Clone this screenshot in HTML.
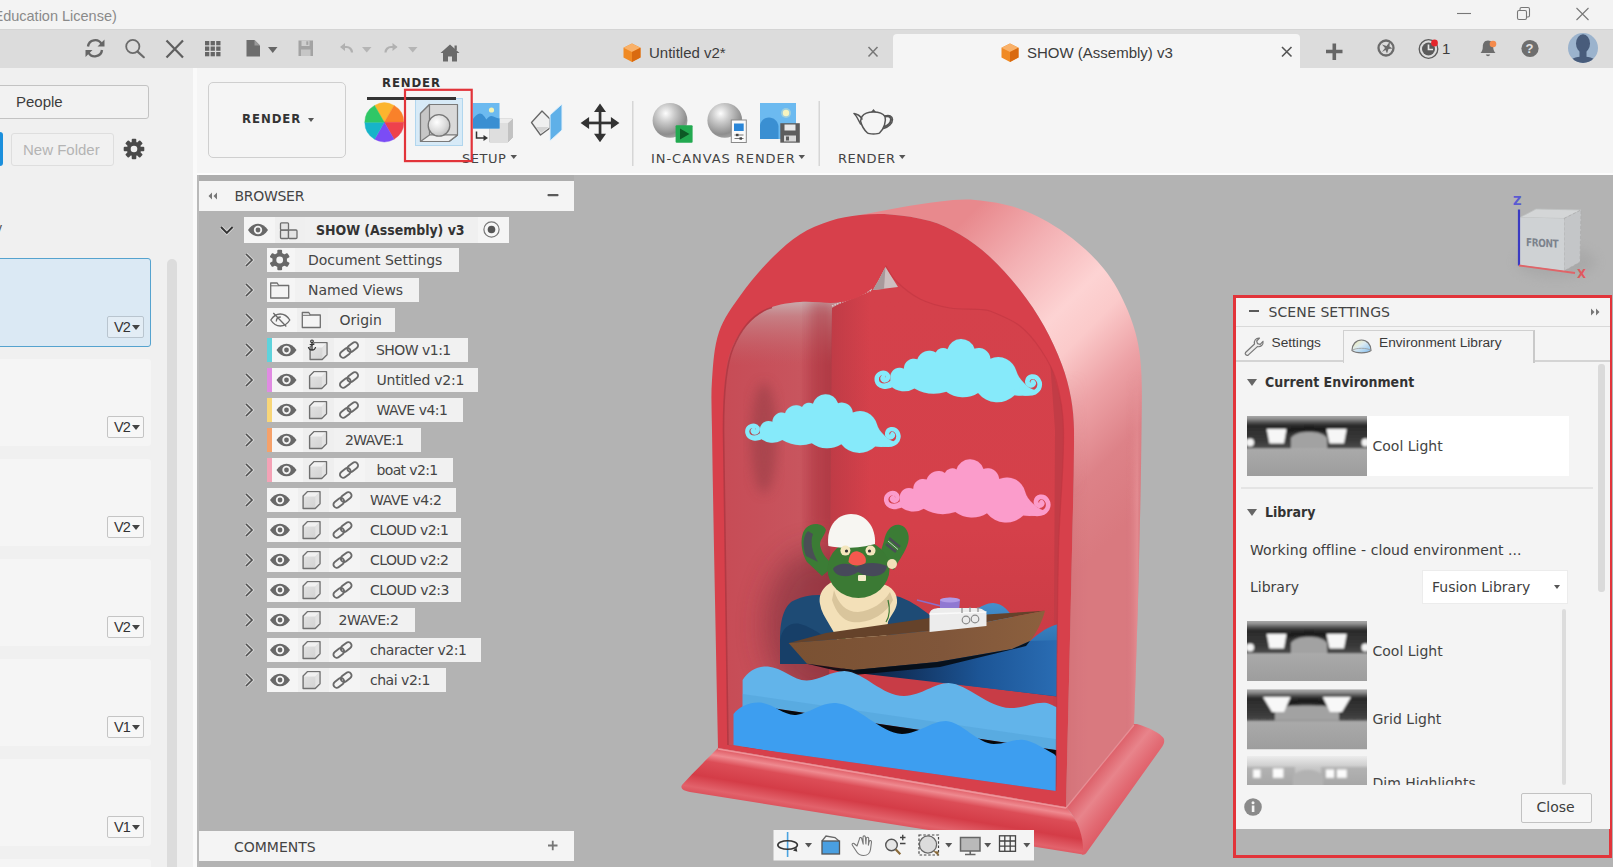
<!DOCTYPE html>
<html lang="en"><head><meta charset="utf-8"><title>SHOW (Assembly) v3 - Render</title>
<style>
html,body{margin:0;padding:0}
body{width:1613px;height:867px;position:relative;overflow:hidden;background:#b3b3b3;font-family:"DejaVu Sans","Liberation Sans",sans-serif;font-size:14px;color:#3a3a3a;line-height:1}
.a{position:absolute}
.lib{font-family:"Liberation Sans",sans-serif}
.t{position:absolute;white-space:nowrap;line-height:20px;height:20px}
.bold{font-family:"DejaVu Sans Condensed","DejaVu Sans",sans-serif;font-weight:bold;font-stretch:condensed}
svg{position:absolute;overflow:visible}
/* title bar */
#title{left:0;top:0;width:1613px;height:29px;background:#f3f3f3}
#bar{left:0;top:29px;width:1613px;height:39px;background:#dcdcdc;border-top:1px solid #d4d4d4;box-sizing:border-box}
#left{left:0;top:68px;width:193px;height:799px;background:#f0f0f0}
#lstrip{left:193px;top:68px;width:4px;height:799px;background:#fafafa}
#lstrip2{left:197px;top:68px;width:2px;height:799px;background:#b9b9b9}
#ribbon{left:197px;top:68px;width:1416px;height:106.500px;background:#f5f5f5;box-sizing:border-box;border-bottom:2px solid #fcfcfc}
.tab-act{left:893px;top:34px;width:407px;height:34px;background:#f5f5f5;border-radius:4px 4px 0 0}
.btn{position:absolute;box-sizing:border-box;border:1px solid #c9c9c9;border-radius:3px;background:#f4f4f4}
.item{position:absolute;left:-4px;width:155px;height:87px;background:#f5f5f5;border-radius:3px}
.ver{position:absolute;left:107px;width:37px;height:22px;box-sizing:border-box;border:1px solid #c4c4c4;border-radius:2px;background:#f7f7f7;font-size:14.500px;line-height:20px;padding-left:6px;color:#333;letter-spacing:-0.8px}
.ver:after{content:"";position:absolute;right:3px;top:8px;border:4px solid transparent;border-top:5px solid #444;border-bottom:0}
/* browser */
.row{position:absolute;height:24px;background:#f1f1f1}
.cell{position:absolute;top:0;height:24px;background:#ededed}
.rt{position:absolute;top:2px;line-height:20px;white-space:nowrap;color:#444;font-size:14px}
.cb{position:absolute;left:0;top:0;width:5.500px;height:24px}
</style></head><body>
<!-- title bar -->
<div class="a" id="title"></div>
<div class="t lib" style="left:-6.500px;top:5.500px;font-size:14.500px;color:#8a8a8a">Education License)</div>
<svg style="left:1450px;top:0" width="160" height="28" viewBox="0 0 160 28" fill="none" stroke="#777" stroke-width="1.1">
<path d="M7 13.5h14"/><rect x="67.500" y="10.500" width="9" height="9" rx="1.500"/><path d="M70 10.500v-1.500a1.500 1.500 0 0 1 1.500-1.500h6.500a1.500 1.500 0 0 1 1.500 1.500v6.500a1.500 1.500 0 0 1-1.500 1.500h-1.500"/>
<path d="M126.500 8l12 12M138.500 8l-12 12"/></svg>
<!-- app bar -->
<div class="a" id="bar"></div>
<div class="a tab-act"></div>
<svg style="left:0;top:28px" width="1613" height="40" viewBox="0 28 1613 40">
<!-- refresh -->
<g fill="none" stroke="#666" stroke-width="2.400"><path d="M88 46.500a7.200 7.200 0 0 1 13.500-2.500"/><path d="M102 50a7.200 7.200 0 0 1-13.500 2.500"/></g>
<path d="M104.500 39.500v7h-7zM85.500 57v-7h7z" fill="#666"/>
<!-- search -->
<circle cx="132.800" cy="46.500" r="6.600" fill="none" stroke="#6b6b6b" stroke-width="1.800"/><path d="M137.600 51.600l6.200 5.600" stroke="#6b6b6b" stroke-width="2.200" stroke-linecap="round"/>
<!-- X -->
<path d="M166.500 40.500l16.500 17M183 40.500l-16.500 17" stroke="#5f5f5f" stroke-width="2.200" fill="none"/>
<!-- grid -->
<g fill="#666"><rect x="205" y="41" width="4.300" height="4.300"/><rect x="210.600" y="41" width="4.300" height="4.300"/><rect x="216.200" y="41" width="4.300" height="4.300"/><rect x="205" y="46.500" width="4.300" height="4.300"/><rect x="210.600" y="46.500" width="4.300" height="4.300"/><rect x="216.200" y="46.500" width="4.300" height="4.300"/><rect x="205" y="52" width="4.300" height="4.300"/><rect x="210.600" y="52" width="4.300" height="4.300"/><rect x="216.200" y="52" width="4.300" height="4.300"/></g>
<!-- file -->
<path d="M246.500 40h8l5.500 5.500v11h-13.500z" fill="#6d6d6d"/><path d="M254.500 40v5.500h5.500" fill="#9a9a9a"/>
<path d="M268 47h9.500l-4.750 6z" fill="#666"/>
<!-- save -->
<g fill="#a3a3a3"><path d="M298.500 40.500h14.500v15.500h-14.500z"/></g><rect x="301.500" y="40.500" width="8" height="5.500" fill="#cfcfcf"/><rect x="301" y="49.500" width="9.500" height="6.500" fill="#c6c6c6"/><rect x="306.300" y="41.300" width="2" height="3.600" fill="#a3a3a3"/>
<!-- undo -->
<path d="M345 43l-5 4 5 4" fill="#b1b1b1" stroke="none"/><path d="M341 47h5.500a5.500 5.500 0 0 1 5.500 5.500" fill="none" stroke="#b1b1b1" stroke-width="2.200"/>
<path d="M362 47h9.500l-4.750 5.500z" fill="#b5b5b5"/>
<!-- redo -->
<path d="M392.500 43l5 4-5 4" fill="#b1b1b1"/><path d="M396.500 47h-5.500a5.500 5.500 0 0 0-5.500 5.500" fill="none" stroke="#b1b1b1" stroke-width="2.200"/>
<path d="M408 47h9.500l-4.750 5.500z" fill="#b5b5b5"/>
<!-- home -->
<path d="M450 44.500l9.500 8.500h-2.500v8.500h-5v-5h-4v5h-5v-8.500h-2.500z" fill="#6a6a6a"/><rect x="454.500" y="45.500" width="2.300" height="4.500" fill="#6a6a6a"/>
<!-- tab 1 -->
<g transform="translate(632,53)"><path d="M0-9.500l8.500 4.200v9.800l-8.500 4.500-8.500-4.500v-9.800z" fill="#f08a24"/><path d="M0-9.500l8.500 4.200-8.500 4.300-8.500-4.300z" fill="#f9b169"/><path d="M0-1v10l8.500-4.500v-9.800z" fill="#d96a10"/></g>
<path d="M868.500 47l9 9.500M877.500 47l-9 9.500" stroke="#777" stroke-width="1.500" fill="none"/>
<!-- tab 2 -->
<g transform="translate(1010,53)"><path d="M0-9.500l8.500 4.200v9.800l-8.500 4.500-8.500-4.500v-9.800z" fill="#f08a24"/><path d="M0-9.500l8.500 4.200-8.500 4.300-8.500-4.300z" fill="#f9b169"/><path d="M0-1v10l8.500-4.500v-9.800z" fill="#d96a10"/></g>
<path d="M1282 47l9.500 9.500M1291.500 47l-9.500 9.500" stroke="#555" stroke-width="1.600" fill="none"/>
<!-- plus -->
<path d="M1326 51.500h16.500M1334.300 43.500v16.500" stroke="#666" stroke-width="3.600" fill="none"/>
<!-- ext -->
<circle cx="1386" cy="48" r="7.500" fill="none" stroke="#6b6b6b" stroke-width="2.300"/><path d="M1382 52l3-4-3-3.500 4.500 1.500 3.500-4.500-.5 5 3 2-4 .5-1.500 4.500-1.500-3.500z" fill="#6b6b6b"/>
<!-- clock -->
<circle cx="1428.500" cy="49" r="9.300" fill="none" stroke="#5a5a5a" stroke-width="1.300"/><circle cx="1428.500" cy="49" r="6.500" fill="#5a5a5a"/><path d="M1428.500 44.500v5h4.500" stroke="#e6e6e6" stroke-width="1.700" fill="none"/><circle cx="1434.500" cy="43" r="3.400" fill="#e3252b"/>
<!-- bell -->
<path d="M1488 40.500c-3.700 0-5.200 3-5.200 6.200 0 3.300-1 4.800-2.300 6.300h15c-1.300-1.500-2.300-3-2.300-6.300 0-3.200-1.500-6.200-5.200-6.200z" fill="#6d6d6d"/><path d="M1485.800 54.500a2.300 2.300 0 0 0 4.400 0z" fill="#6d6d6d"/><circle cx="1493" cy="44" r="3.300" fill="#f58b4c"/>
<!-- help -->
<circle cx="1530" cy="48.500" r="8.600" fill="#6e6e6e"/>
<!-- avatar -->
<circle cx="1583" cy="48" r="15" fill="#9bb3cd"/><clipPath id="avc"><circle cx="1583" cy="48" r="15"/></clipPath><g clip-path="url(#avc)" fill="#485c7b"><ellipse cx="1583" cy="43.500" rx="7" ry="9.300"/><rect x="1579.500" y="50" width="7" height="8"/><path d="M1567 68c0-8 6-11 16-11.500c10 .5 16 3.500 16 11.500z"/></g>
</svg>
<div class="t lib" style="left:649px;top:42.700px;font-size:15px;color:#3c3c3c">Untitled v2*</div>
<div class="t lib" style="left:1027px;top:42.700px;font-size:15px;color:#3c3c3c">SHOW (Assembly) v3</div>
<div class="t lib" style="left:1442px;top:39px;font-size:15px;color:#3c3c3c">1</div>
<div class="t lib" style="left:1525.500px;top:38.500px;font-size:13px;color:#e2e2e2;font-weight:bold">?</div>
<!-- left data panel -->
<div class="a" id="left"></div>
<div class="a" id="lstrip"></div>
<div class="a" id="lstrip2"></div>
<div class="btn" style="left:-10px;top:85px;width:159px;height:34px;background:#f2f2f2;border-color:#c3c3c3"></div>
<div class="t lib" style="left:16px;top:92px;font-size:15px;color:#3c3c3c">People</div>
<div class="a" style="left:0;top:132px;width:3px;height:34px;background:#1b8fdc;border-radius:0 3px 3px 0"></div>
<div class="btn" style="left:11px;top:133px;width:103px;height:33px;background:#f1f1f1;border-color:#dedede"></div>
<div class="t lib" style="left:23px;top:140px;font-size:15px;color:#b4b4b4">New Folder</div>
<svg style="left:123px;top:138px" width="22" height="22" viewBox="-11 -11 22 22"><g fill="#4a4a4a"><circle r="7.200"/><g id="gt"><rect x="-2.300" y="-10.300" width="4.600" height="20.600" rx="1"/></g><use href="#gt" transform="rotate(45)"/><use href="#gt" transform="rotate(90)"/><use href="#gt" transform="rotate(135)"/></g><circle r="3.300" fill="#f0f0f0"/></svg>
<div class="t lib" style="left:-5px;top:218px;font-size:14px;color:#555">y</div>
<div class="item" style="top:258px;height:89px;box-sizing:border-box;background:#dbe9f4;border:1px solid #55a3cf"></div>
<div class="item" style="top:359px"></div>
<div class="item" style="top:459px"></div>
<div class="item" style="top:559px"></div>
<div class="item" style="top:659px"></div>
<div class="item" style="top:759px"></div>
<div class="item" style="top:859px"></div>
<div class="ver lib" style="top:316px;background:#e3edf5;border-color:#b9c5cf">V2</div>
<div class="ver lib" style="top:416px">V2</div>
<div class="ver lib" style="top:516px">V2</div>
<div class="ver lib" style="top:616px">V2</div>
<div class="ver lib" style="top:716px">V1</div>
<div class="ver lib" style="top:816px">V1</div>
<div class="a" style="left:167px;top:259px;width:10px;height:620px;background:#dcdcdc;border-radius:5px"></div>
<!-- ribbon -->
<div class="a" id="ribbon"></div>
<div class="btn" style="left:208px;top:82px;width:138px;height:76px;border-radius:5px;border-color:#cfcfcf;background:#f5f5f5"></div>
<div class="t bold" style="left:242px;top:109px;font-size:13px;color:#333;letter-spacing:.95px">RENDER</div>
<div class="a" style="left:307.500px;top:117.500px;border:3.500px solid transparent;border-top:4.500px solid #555;border-bottom:0"></div>
<div class="t bold" style="left:382px;top:73px;font-size:13px;color:#2f2f2f;letter-spacing:.9px">RENDER</div>
<div class="a" style="left:415px;top:98px;width:48px;height:48px;box-sizing:border-box;background:#d7eaf7;border:1px solid #b1d6ee"></div>
<div class="a" style="left:367px;top:97px;width:89px;height:3px;background:#333"></div>
<div class="t" style="left:462px;top:149px;font-size:13px;color:#444;letter-spacing:.5px">SETUP</div>
<div class="t" style="left:651px;top:149px;font-size:13px;color:#444;letter-spacing:.95px">IN-CANVAS RENDER</div>
<div class="t" style="left:838px;top:149px;font-size:13px;color:#444;letter-spacing:.55px">RENDER</div>
<svg style="left:195px;top:68px" width="1418" height="106" viewBox="195 68 1418 106">
<defs>
<radialGradient id="sph" cx=".38" cy=".3" r=".75"><stop offset="0" stop-color="#fdfdfd"/><stop offset=".35" stop-color="#c9c9c9"/><stop offset=".8" stop-color="#8e8e8e"/><stop offset="1" stop-color="#a8a8a8"/></radialGradient>
<radialGradient id="sph2" cx=".4" cy=".35" r=".7"><stop offset="0" stop-color="#ffffff"/><stop offset=".6" stop-color="#dcdcdc"/><stop offset="1" stop-color="#bdbdbd"/></radialGradient>
</defs>
<!-- carets -->
<path d="M510.500 155h6.500l-3.250 4z" fill="#555"/><path d="M798.500 155h6.500l-3.250 4z" fill="#555"/><path d="M899 155h6.500l-3.250 4z" fill="#555"/>
<!-- separators -->
<rect x="632" y="101" width="1.500" height="65" fill="#d6d6d6"/><rect x="818.500" y="101" width="1.500" height="65" fill="#d6d6d6"/>
<!-- color wheel -->
<g transform="translate(384.300,122.300)">
<path d="M0 0L-9.75 -16.89A19.5 19.5 0 0 1 9.75 -16.89z" fill="#fcb52e" stroke="#fcb52e" stroke-width=".4"/>
<path d="M0 0L9.75 -16.89A19.5 19.5 0 0 1 19.50 0.00z" fill="#f9812a" stroke="#f9812a" stroke-width=".4"/>
<path d="M0 0L19.50 0.00A19.5 19.5 0 0 1 9.75 16.89z" fill="#ee424c" stroke="#ee424c" stroke-width=".4"/>
<path d="M0 0L9.75 16.89A19.5 19.5 0 0 1 -9.75 16.89z" fill="#7b4cf5" stroke="#7b4cf5" stroke-width=".4"/>
<path d="M0 0L-9.75 16.89A19.5 19.5 0 0 1 -19.50 0.00z" fill="#17b4c9" stroke="#17b4c9" stroke-width=".4"/>
<path d="M0 0L-19.50 0.00A19.5 19.5 0 0 1 -9.75 -16.89z" fill="#2fc766" stroke="#2fc766" stroke-width=".4"/>
</g>
<!-- scene settings icon -->
<path d="M429.500 104.500h28v30.500l-8.500 6.500h-28.500v-28z" fill="#d9d9d9" stroke="#7a7a7a" stroke-width="1.200" stroke-linejoin="round"/>
<path d="M429.500 104.500v30.500h28l-8.500 6.500h-28.500v-28z" fill="#c6c6c6" stroke="#7a7a7a" stroke-width="1.200" stroke-linejoin="round"/>
<path d="M429.500 135h28l-8.500 6.500h-28.500z" fill="#efefef" stroke="#7a7a7a" stroke-width="1.200" stroke-linejoin="round"/>
<circle cx="439" cy="125.400" r="10.800" fill="url(#sph2)" stroke="#777" stroke-width="1.300"/>
<!-- red highlight rect -->
<rect x="405" y="89.800" width="66.700" height="71.300" fill="none" stroke="#e2343a" stroke-width="2.200"/>
<!-- image + cube -->
<path d="M489.500 123l4.500-4h18.500v18.500l-4.500 4.500h-18.500z" fill="#d2d2d2" stroke="#bcbcbc" stroke-width=".8"/><path d="M489.500 123h18.500v19h-18.500z" fill="#dedede"/><path d="M508 123l4.500-4v18.500l-4.500 4.500z" fill="#c2c2c2"/><path d="M489.500 123l4.500-4h18.500l-4.500 4z" fill="#ececec"/>
<rect x="473" y="103" width="26.500" height="25.500" fill="#6cbaf0"/><path d="M473 128.500v-9.500c2-3 4.500-5.500 7-5.500s4.500 3 6.500 6c1.500-2 3-3.500 5-3.500 2.500 0 4.500 2.500 8 2.500v10z" fill="#3a8fd2"/><circle cx="491.500" cy="110" r="2.600" fill="#f4f3b4"/>
<path d="M476.500 131.500v6.500h8" fill="none" stroke="#333" stroke-width="1.500"/><path d="M483.500 135l4.500 3-4.500 3z" fill="#333"/>
<!-- decal -->
<path d="M531.500 122.500l10.500-11.500 8 8v9l-9.500 7z" fill="#efefef" stroke="#666" stroke-width="1.300" stroke-linejoin="round"/><path d="M536 127l5 6 8-6z" fill="#d3d3d3"/>
<path d="M550 115l12-11v26l-12 11z" fill="#5fb0e8" stroke="#e4f1fb" stroke-width="1"/>
<!-- move -->
<g fill="#333" stroke="none"><rect x="598.700" y="109" width="2.700" height="28"/><rect x="586" y="121.600" width="28" height="2.700"/><path d="M600 103.500l6 8.500h-12zM600 142.200l6-8.500h-12zM580.600 122.900l8.500-6v12zM619.400 122.900l-8.500-6v12z"/></g>
<!-- sphere play -->
<circle cx="670" cy="120.400" r="17.400" fill="url(#sph)"/><rect x="675.600" y="125.300" width="17" height="17.400" rx="1" fill="#22a950"/><path d="M680 128.500l9.500 5.500-9.500 5.500z" fill="#0d5a25"/>
<!-- sphere settings -->
<circle cx="724.800" cy="120.400" r="17.400" fill="url(#sph)"/><rect x="731.300" y="120" width="15" height="22.500" fill="#fafafa" stroke="#8a8a8a" stroke-width="1"/><rect x="734" y="123.500" width="9.700" height="7.500" fill="#2a86d8"/><path d="M734.500 135h9M734.500 138.500h9" stroke="#777" stroke-width="1.200"/><rect x="736" y="133.800" width="2.500" height="2.400" fill="#444"/><rect x="739.500" y="137.300" width="2.500" height="2.400" fill="#444"/>
<!-- image save -->
<rect x="760" y="103" width="36" height="36" fill="#6cbaf0"/><path d="M760 139v-14c1-5 5-7.500 9-7.500 5 0 8.500 3.500 9.500 8.500v13z" fill="#3a8fd2"/><circle cx="786" cy="113" r="3.200" fill="#f6f4c0"/><circle cx="786" cy="113" r="5" fill="#f6f4c0" opacity=".35"/>
<rect x="780.300" y="123.200" width="19.500" height="19.500" fill="#5d5d5d"/><rect x="784.500" y="124.500" width="11" height="6" fill="#e9e9e9"/><rect x="784" y="135.500" width="12" height="6" fill="#d8d8d8"/><rect x="786" y="136.500" width="3" height="4" fill="#5d5d5d"/>
<!-- teapot -->
<g fill="none" stroke="#555" stroke-width="1.500" stroke-linejoin="round" stroke-linecap="round"><path d="M862 116.500c2-3 6-4.500 11.500-4.500s9.500 1.500 11.500 4.500c1.500 5-1 12-5.500 16.500-1.500 1.300-10.500 1.300-12 0-4-3.500-6-8-7-12z"/><path d="M862 119c-2-3.500-4.500-5-8-5.500 2.500 2 4 6 6.500 10.500"/><path d="M885 116c4-1.500 7.500 0 7.500 3.500 0 4-4 7.500-9 9"/></g><path d="M871 112l2.500-3 2.500 3z" fill="#555"/><path d="M885 116.500c3-1 6 0 6 3 0 3-3 6-7 7.500" fill="none" stroke="#555" stroke-width="2.100"/>
</svg>
<!-- canvas 3D model -->
<svg style="left:195px;top:174px" width="1418" height="693" viewBox="195 174 1418 693">
<defs>
<linearGradient id="sideg" gradientUnits="userSpaceOnUse" x1="950" y1="234" x2="1183" y2="467"><stop offset="0" stop-color="#e8898d"/><stop offset=".2" stop-color="#f3b0b3"/><stop offset=".4" stop-color="#fdd3d3"/><stop offset=".5" stop-color="#fbcaca"/><stop offset=".65" stop-color="#eda2a6"/><stop offset=".82" stop-color="#dd8288"/><stop offset="1" stop-color="#d9797f"/></linearGradient>

<linearGradient id="sideh" gradientUnits="userSpaceOnUse" x1="1066" y1="0" x2="1141" y2="0"><stop offset="0" stop-color="#c8646c" stop-opacity=".35"/><stop offset=".3" stop-color="#d9797f" stop-opacity="0"/><stop offset=".8" stop-color="#d9797f" stop-opacity="0"/><stop offset=".95" stop-color="#ee9ea3" stop-opacity=".5"/><stop offset="1" stop-color="#d67d84" stop-opacity=".3"/></linearGradient><linearGradient id="fadev" gradientUnits="userSpaceOnUse" x1="0" y1="370" x2="0" y2="500"><stop offset="0" stop-color="#000"/><stop offset="1" stop-color="#fff"/></linearGradient><mask id="sidelowm" maskUnits="userSpaceOnUse" x="1000" y="300" width="200" height="560"><rect x="1000" y="300" width="200" height="560" fill="url(#fadev)"/></mask>
<linearGradient id="lwall" gradientUnits="userSpaceOnUse" x1="724" y1="0" x2="832" y2="0"><stop offset="0" stop-color="#c74c56"/><stop offset=".35" stop-color="#c7505a"/><stop offset=".7" stop-color="#c8555e"/><stop offset=".9" stop-color="#c14852"/><stop offset="1" stop-color="#b43e49"/></linearGradient><clipPath id="lwc"><path d="M720 760L720 300L872 280L872 290L845 300L832 308L829 700z"/></clipPath>
<linearGradient id="lwalltop" gradientUnits="userSpaceOnUse" x1="0" y1="300" x2="0" y2="365"><stop offset="0" stop-color="#c9b0b2"/><stop offset=".25" stop-color="#c68a8e" stop-opacity=".8"/><stop offset="1" stop-color="#c4666d" stop-opacity="0"/></linearGradient>
<linearGradient id="backg" gradientUnits="userSpaceOnUse" x1="0" y1="300" x2="0" y2="680"><stop offset="0" stop-color="#d4414b"/><stop offset=".6" stop-color="#d5404a"/><stop offset="1" stop-color="#c63a44"/></linearGradient>
<linearGradient id="backh" gradientUnits="userSpaceOnUse" x1="828" y1="0" x2="870" y2="0"><stop offset="0" stop-color="#b83a45" stop-opacity=".8"/><stop offset="1" stop-color="#b83a45" stop-opacity="0"/></linearGradient>
<linearGradient id="basef" gradientUnits="userSpaceOnUse" x1="0" y1="0" x2="-10" y2="60" gradientTransform="translate(900,775)"><stop offset="0" stop-color="#d53e49"/><stop offset=".18" stop-color="#ef8a90"/><stop offset=".3" stop-color="#dc4d57"/><stop offset=".55" stop-color="#d43c47"/><stop offset=".75" stop-color="#e2626b"/><stop offset="1" stop-color="#cf3843"/></linearGradient>
<linearGradient id="baser" gradientUnits="userSpaceOnUse" x1="1085" y1="775" x2="1135" y2="815"><stop offset="0" stop-color="#d8525c"/><stop offset=".35" stop-color="#e8848b"/><stop offset=".6" stop-color="#e26a73"/><stop offset="1" stop-color="#d84954"/></linearGradient>
<linearGradient id="dkwave" gradientUnits="userSpaceOnUse" x1="0" y1="610" x2="0" y2="700"><stop offset="0" stop-color="#2a6596"/><stop offset=".5" stop-color="#1f5a92"/><stop offset="1" stop-color="#174a7e"/></linearGradient>
<linearGradient id="midwave" gradientUnits="userSpaceOnUse" x1="0" y1="603" x2="0" y2="690"><stop offset="0" stop-color="#4590cc"/><stop offset=".45" stop-color="#2f74b4"/><stop offset="1" stop-color="#1b4c86"/></linearGradient><linearGradient id="underb" gradientUnits="userSpaceOnUse" x1="830" y1="0" x2="1060" y2="0"><stop offset="0" stop-color="#091628"/><stop offset=".3" stop-color="#11305a"/><stop offset=".65" stop-color="#1c5596"/><stop offset="1" stop-color="#2a6db4"/></linearGradient>
<linearGradient id="boatg" gradientUnits="userSpaceOnUse" x1="790" y1="0" x2="1045" y2="0"><stop offset="0" stop-color="#7a5132"/><stop offset=".6" stop-color="#80563a"/><stop offset="1" stop-color="#8c603e"/></linearGradient>
<filter id="blur4" x="-30%" y="-30%" width="160%" height="160%"><feGaussianBlur stdDeviation="6"/></filter>
<filter id="blur8" x="-50%" y="-50%" width="200%" height="200%"><feGaussianBlur stdDeviation="14"/></filter><filter id="blur2" x="-30%" y="-30%" width="160%" height="160%"><feGaussianBlur stdDeviation="2"/></filter>
<clipPath id="opening"><path d="M728.0 745.0C727.3 696.7 726.7 648.3 726.0 600.0C725.2 543.3 723.8 486.7 723.5 430.0C723.4 413.3 723.4 396.6 725.0 380.0C726.0 369.8 727.3 359.5 731.0 350.0C734.4 341.2 739.6 332.9 746.0 326.0C752.8 318.7 760.9 312.1 770.0 308.0C779.3 303.9 789.8 302.8 800.0 302.0C814.0 300.8 828.2 304.6 842.0 302.0C852.8 300.0 863.6 295.5 872.0 288.5C878.8 282.8 881.0 273.2 885.5 265.5C889.0 270.7 891.5 276.7 896.0 281.0C903.2 288.0 911.1 294.5 920.0 299.0C929.3 303.7 939.7 306.2 950.0 308.0C959.9 309.7 970.0 308.8 980.0 309.5C983.4 309.8 986.9 309.7 990.0 311.0C1000.3 315.3 1011.1 319.2 1020.0 326.0C1028.4 332.5 1035.1 341.2 1041.0 350.0C1047.2 359.3 1053.0 369.2 1056.0 380.0C1060.6 396.2 1063.3 413.1 1063.5 430.0C1064.1 470.0 1059.3 510.0 1058.5 550.0C1056.8 630.3 1056.8 710.7 1056.0 791.0Z"/></clipPath>
<g id="cloud"><path d="M215 385A80 80 0 0 1 330 325A85 85 0 0 1 445 245A105 105 0 0 1 600 188A70 70 0 0 1 700 160A120 120 0 0 1 930 155A100 100 0 0 1 1065 240A160 160 0 0 1 1285 345Q1300 400 1350 445Q1390 490 1440 505L1420 545Q1330 560 1270 550A210 210 0 0 1 960 530A240 240 0 0 1 690 520A330 330 0 0 1 420 492A170 170 0 0 1 215 470Q160 500 115 470L125 440Q170 465 215 430Z"/><path d="M1290 495C1340 548 1440 550 1475 492C1500 440 1462 385 1415 392C1374 400 1366 450 1400 464C1425 471 1440 450 1426 437" fill="none" stroke-width="40" stroke-linecap="round"/><path d="M240 455C190 495 112 482 100 425C92 377 140 346 180 366C205 382 200 420 170 424C150 426 142 406 156 397" fill="none" stroke-width="38" stroke-linecap="round"/></g>
</defs>
<!-- side surface -->
<path d="M860.0 215.0C873.3 212.5 886.6 209.8 900.0 207.5C913.3 205.3 926.6 202.8 940.0 201.5C951.6 200.3 963.4 198.9 975.0 200.0C990.2 201.4 1005.6 203.7 1020.0 209.0C1036.0 214.9 1051.2 223.1 1065.0 233.0C1079.4 243.3 1092.9 255.2 1104.0 269.0C1114.1 281.5 1121.8 296.1 1128.0 311.0C1133.9 325.3 1138.3 340.6 1140.0 356.0C1142.8 380.5 1141.7 405.3 1141.5 430.0C1141.0 486.7 1139.4 543.3 1138.0 600.0C1136.9 641.3 1135.3 682.7 1134.0 724.0L1066 807C1068.0 721.3 1070.2 635.7 1072.0 550.0C1072.8 510.0 1074.3 470.0 1074.0 430.0C1073.9 419.3 1072.9 408.5 1071.0 398.0C1068.9 386.8 1066.0 375.7 1062.0 365.0C1057.0 351.6 1051.0 338.5 1044.0 326.0C1037.0 313.4 1028.9 301.4 1020.0 290.0C1010.8 278.3 1000.9 267.1 990.0 257.0C980.8 248.5 970.7 240.9 960.0 234.5C950.6 228.9 940.5 224.0 930.0 221.0C917.0 217.3 903.5 215.6 890.0 214.4C880.0 213.5 870.0 214.8 860.0 215.0Z" fill="url(#sideg)"/>
<path d="M860.0 215.0C873.3 212.5 886.6 209.8 900.0 207.5C913.3 205.3 926.6 202.8 940.0 201.5C951.6 200.3 963.4 198.9 975.0 200.0C990.2 201.4 1005.6 203.7 1020.0 209.0C1036.0 214.9 1051.2 223.1 1065.0 233.0C1079.4 243.3 1092.9 255.2 1104.0 269.0C1114.1 281.5 1121.8 296.1 1128.0 311.0C1133.9 325.3 1138.3 340.6 1140.0 356.0C1142.8 380.5 1141.7 405.3 1141.5 430.0C1141.0 486.7 1139.4 543.3 1138.0 600.0C1136.9 641.3 1135.3 682.7 1134.0 724.0L1066 807C1068.0 721.3 1070.2 635.7 1072.0 550.0C1072.8 510.0 1074.3 470.0 1074.0 430.0C1073.9 419.3 1072.9 408.5 1071.0 398.0C1068.9 386.8 1066.0 375.7 1062.0 365.0C1057.0 351.6 1051.0 338.5 1044.0 326.0C1037.0 313.4 1028.9 301.4 1020.0 290.0C1010.8 278.3 1000.9 267.1 990.0 257.0C980.8 248.5 970.7 240.9 960.0 234.5C950.6 228.9 940.5 224.0 930.0 221.0C917.0 217.3 903.5 215.6 890.0 214.4C880.0 213.5 870.0 214.8 860.0 215.0Z" fill="url(#sideh)" mask="url(#sidelowm)"/>
<!-- front face -->
<path d="M718.0 748.0C717.0 698.7 715.9 649.3 715.0 600.0C713.9 543.3 712.8 486.7 712.0 430.0C711.8 413.3 710.8 396.6 712.0 380.0C713.2 363.9 713.9 347.3 719.0 332.0C723.4 318.8 732.0 307.3 740.0 296.0C749.0 283.3 759.1 271.2 770.0 260.0C779.2 250.6 789.0 241.7 800.0 234.5C809.2 228.5 819.6 224.4 830.0 221.0C839.7 217.8 849.9 216.1 860.0 215.0C869.9 213.9 880.0 213.5 890.0 214.4C903.5 215.6 917.0 217.3 930.0 221.0C940.5 224.0 950.6 228.9 960.0 234.5C970.7 240.9 980.8 248.5 990.0 257.0C1000.9 267.1 1010.8 278.3 1020.0 290.0C1028.9 301.4 1037.0 313.4 1044.0 326.0C1051.0 338.5 1057.0 351.6 1062.0 365.0C1066.0 375.7 1068.9 386.8 1071.0 398.0C1072.9 408.5 1073.9 419.3 1074.0 430.0C1074.3 470.0 1072.8 510.0 1072.0 550.0C1070.2 635.7 1068.0 721.3 1066.0 807.0Z" fill="#d7404b"/>
<!-- interior -->
<g clip-path="url(#opening)">
<rect x="700" y="250" width="400" height="560" fill="url(#backg)"/>
<rect x="828" y="290" width="50" height="420" fill="url(#backh)"/>
<!-- floor -->
<path d="M728 640L1062 650L1062 800L728 750z" fill="#c83c46"/>
<!-- left wall -->
<path d="M720 760L720 300L872 280L872 290L845 300L832 308L829 700z" fill="url(#lwall)"/>
<path d="M720 300L872 280L872 290L845 300L832 308L830 430L720 430z" fill="url(#lwalltop)"/>
<g clip-path="url(#lwc)"><ellipse cx="764" cy="438" rx="13" ry="55" fill="#8e3a42" opacity=".5" filter="url(#blur4)"/><ellipse cx="815" cy="625" rx="50" ry="75" fill="#7e2f3a" opacity=".6" filter="url(#blur8)"/><rect x="810" y="300" width="24" height="230" fill="#a8343f" opacity=".45" filter="url(#blur4)"/></g>

<!-- gray peak triangle -->
<path d="M885.500 267L873 290L898 287z" fill="#cdbfc0"/><path d="M885.500 267L873 290L884 289z" fill="#a8999b"/>
<path d="M832 306L872 290" stroke="#d9c9c9" stroke-width="1.500" stroke-dasharray="1.500 1.200"/>
<!-- inner right wall -->
<path d="M1050 360L1066 420L1060 800L1053 795L1055 430z" fill="#c23c46"/>
<!-- clouds -->
<use href="#cloud" transform="translate(875,338.700) scale(.1178) translate(-85,-70)" fill="#86eafa" stroke="#86eafa"/>
<use href="#cloud" transform="translate(745.700,394) scale(.1093) translate(-85,-70)" fill="#86eafa" stroke="#86eafa"/>
<use href="#cloud" transform="translate(884.500,459) scale(.1171,.1178) translate(-85,-70)" fill="#fb9ccb" stroke="#fb9ccb"/>
<!-- back-right wave -->
<path d="M955 632C966 615 982 603 993 603C1004 603 1012 614 1022 632L1030 641C1040 632 1050 626 1057 624.600L1062 624L1062 697L955 684z" fill="url(#midwave)"/>
<!-- dark-left wave -->
<path d="M786 664C781 662 780 656 780 648L780 640C780 616 786 603 795 600C803 596 812 594.500 822 595L896 596C908 599 920 607 932 617L932 672L807 664z" fill="#1e4b75"/>
<path d="M780 664L780 640C782 628 790 622 800 624C815 628 830 640 840 652L807 664z" fill="#173f68"/>
<!-- under boat gradient -->
<path d="M800 655L857 673L1056.400 696.200L1062 696L1062 640L1030 641L937 655z" fill="url(#underb)"/>
<!-- character -->
<g>
<path d="M820 604C818 592 826 583 838 580L882 584C892 586 898 594 897 603C896 611 890 616 888 622L886 640L838 644C836 630 822 618 820 604z" fill="#f3e0b8"/>
<path d="M834 590C838 604 846 612 858 612C872 611 884 602 890 592L893 600C886 614 870 624 852 622C842 620 836 612 832 600z" fill="#d9c59c"/>
<path d="M838 644L842 634L850 644z" fill="#3c7a34"/>
<path d="M888 600C890 608 890 616 886 622" stroke="#3c7a34" stroke-width="1.200" fill="none"/>
<path d="M807 562C800 550 800 534 806 528C812 522 823 523 826 530C824 537 820 539 820 545C822 555 828 560 834 566L822 576z" fill="#3b7c35"/>
<path d="M806 556C802 546 803 536 808 531L813 534C810 542 812 552 818 562z" fill="#4a4f55"/>
<path d="M884 541C886 530 892 523.500 900 525C908 527 911 537 907 546C903 556 898 561 894 570L878 560z" fill="#3b7c35"/>
<path d="M886 544L896 552M889 538L900 547" stroke="#4a4f55" stroke-width="2.600"/><path d="M888 541L898 549.500" stroke="#c8ccc8" stroke-width="1"/>
<ellipse cx="858.500" cy="569" rx="31" ry="29" fill="#3b7a34"/>
<circle cx="892" cy="564" r="5" fill="#f3e0b8"/>
<path d="M828.400 546C826 528 836 514 851 514C866 514 876 527 875 544C862 548 842 549 828.400 546z" fill="#f7f6f2"/>
<circle cx="845.400" cy="550.600" r="5" fill="#f4e6bd"/><circle cx="870.500" cy="550.600" r="5" fill="#f4e6bd"/><circle cx="846.500" cy="551" r="1.600" fill="#333"/><circle cx="869.500" cy="551" r="1.600" fill="#333"/>
<path d="M833 569C838 562 850 563 856 567C864 562 878 562 887 566C886 575 876 578 864 575L858 572C850 578 836 578 833 569z" fill="#47495a"/>
<path d="M848.500 562C849 554 853 550.500 858 551.500C864 553 867 558 865.500 563C861 566.500 852 566.500 848.500 562z" fill="#f4584e"/>
<rect x="858" y="575" width="8" height="6" rx="1" fill="#f4edc9"/>
</g>
<!-- boat -->
<path d="M789 643L826 633L930 618L1045 610.700L956 628L881.600 635.800z" fill="#65422a"/>
<path d="M788.600 643L881.600 635.800L956 628L1045 610.700C1042 622 1036 634 1030 641L1012 649L937 662L853.700 670L807 663.700z" fill="url(#boatg)"/>
<path d="M807 663.700L853.700 670L937 662L1012 649L1030 641L1026 646L940 667L854 675z" fill="#060b12" opacity=".9"/>
<!-- chai -->
<path d="M917 600L941 606" stroke="#8a6fc9" stroke-width="1.800"/><path d="M940 600C946 597 954 597 960 600L959 611C953 614 946 614 940 611z" fill="#8f78d2"/><ellipse cx="950" cy="600" rx="10" ry="2.600" fill="#b09ae6"/>
<path d="M929.500 614C929.500 610 934 608 940 608L975 608C982 608 986.500 611 986.500 614L986.500 626L929.500 632z" fill="#ececec"/><path d="M929.500 614L986.500 612" stroke="#fafafa" stroke-width="1.500"/>
<g fill="none" stroke="#8a8a8a" stroke-width="1.200"><circle cx="966" cy="620" r="3.800"/><circle cx="975" cy="619" r="3.800"/><path d="M962 608v5M970 607v5M978 607v5"/></g>
<!-- light wave -->
<path d="M742.600 701L742.600 680C748 671 758 666 768 666.500C782 667.500 794 681 807 680.500C820 680 832 671 844.400 671C864 672 882 696 904 696C922 695.500 934 683 948.500 683C968 684 988 707.500 1010 708C1024 708 1034 702 1045 702.700C1050 703.500 1054 706 1062 710L1062 751L765 707L742.600 716z" fill="#62b4ea"/>
<path d="M742.600 694L1062 740L1062 751L765 707L742.600 710z" fill="#4f9fd8" opacity=".45"/>
<!-- dark gaps -->
<path d="M765 707L1062 751L1062 790L765 745z" fill="#05080c"/>
<!-- front wave -->
<path d="M733.500 745L733.500 714C740 706 750 702 760 702.600C774 704 784 716 796 715C810 713 822 702 836 703C858 705 880 733 902 734C920 733 932 721 946 721C962 722 978 744 994 744C1006 744 1014 739 1022.500 739.700C1034 741 1046 750 1054 754L1060 760L1060 800z" fill="#3d9ef0"/>
</g>
<!-- inner edge highlight on left -->
<path d="M728 745L723.500 430C723.500 395 726 365 733 348C742 326 756 312 772 307.500" fill="none" stroke="#ae3742" stroke-width="1.600" opacity=".85"/>
<path d="M885.5 265.5C889.0 270.7 891.5 276.7 896.0 281.0C903.2 288.0 911.1 294.5 920.0 299.0C929.3 303.7 939.7 306.2 950.0 308.0C959.9 309.7 970.0 308.8 980.0 309.5C983.4 309.8 986.9 309.7 990.0 311.0C1000.3 315.3 1011.1 319.2 1020.0 326.0C1028.4 332.5 1035.1 341.2 1041.0 350.0C1047.2 359.3 1053.0 369.2 1056.0 380.0C1060.6 396.2 1063.3 413.1 1063.5 430.0C1064.1 470.0 1059.3 510.0 1058.5 550.0C1056.8 630.3 1056.8 710.7 1056.0 791.0" fill="none" stroke="#bf3641" stroke-width="1.200" opacity=".6"/>
<!-- base -->
<path d="M1066 807L1134 724L1137 724C1150 728 1160 733 1163.500 738C1165 741 1164 744 1162 747L1087 852C1086 854 1084 855 1082 854.500C1083 840 1080 822 1066 807z" fill="url(#baser)"/>
<path d="M718 748L1066 807C1080 822 1084 840 1083 854.500L690 792C683 791 680 788 682 785C690 776 706 760 718 748z" fill="url(#basef)"/>
<path d="M718 749L1066 808" stroke="#f29aa0" stroke-width="1.600" fill="none" opacity=".9"/>
<path d="M1066 808L1134 725" stroke="#f0a0a5" stroke-width="1.200" fill="none" opacity=".7"/>
<!-- view cube -->
<g>
<ellipse cx="1556" cy="262" rx="40" ry="16" fill="#9d9d9d" opacity=".45" filter="url(#blur4)"/>
<path d="M1520 217.500L1536 209L1581 210L1564 218.500z" fill="#d4d6d7" stroke="#bfc1c2" stroke-width=".8"/>
<path d="M1564 218.500L1581 210L1580 262L1564 271z" fill="#c4c6c8" stroke="#aaa" stroke-width=".7" stroke-dasharray="3 2"/>
<path d="M1520 217.500L1564 218.500L1564 271L1520 265z" fill="#cfd2d4"/>
<path d="M1519 209.500v56" stroke="#3a3ac2" stroke-width="2.200"/>
<path d="M1519 265.500L1575 273" stroke="#e06468" stroke-width="1.800"/>
</g>
<!-- nav toolbar -->
<rect x="773.500" y="830" width="260.500" height="30.500" fill="#f4f4f4"/>
<g fill="#555"><path d="M805 843h7l-3.500 4.500z"/><path d="M945.200 843h7l-3.500 4.500z"/><path d="M984.200 843h7l-3.500 4.500z"/><path d="M1023.300 843h7l-3.500 4.500z"/></g>
<path d="M787.600 832v25" stroke="#4aa3e0" stroke-width="1.600"/><ellipse cx="787.600" cy="845" rx="9.800" ry="4.300" fill="none" stroke="#333" stroke-width="1.600"/><path d="M793 850.500l3.500-3 .8 4.200z" fill="#333"/>
<path d="M822 841l4-5 9 1.500 4 3.500" fill="none" stroke="#666" stroke-width="1.300"/><rect x="822" y="841" width="17.500" height="13" fill="#4a9fe0" stroke="#555" stroke-width="1.300"/>
<g fill="#f6f6f6" stroke="#777" stroke-width="1.100" stroke-linejoin="round"><path d="M857 846l-3-2.500c-1.200-.8-2.500.5-1.600 1.800l4.600 7c1.500 2.200 3.500 3.200 6.500 3.200 4 0 6.500-2.500 7-6l1-7.500c.2-1.600-1.800-2-2.300-.5l-.8 3.700.3-6.700c0-1.700-2.300-1.700-2.500 0l-.3 5.500-.5-7c-.2-1.600-2.400-1.500-2.400.2l.2 7-1.500-5.700c-.5-1.600-2.600-1-2.300.6z"/></g>
<circle cx="891.500" cy="845" r="5.800" fill="#e6e6e6" stroke="#555" stroke-width="1.400"/><path d="M895.800 849.500l4.500 4.800" stroke="#8a6a3a" stroke-width="2.200"/><path d="M900 837.500h5.500M902.750 834.750v5.500M900 843.500h5.500" stroke="#444" stroke-width="1.400"/>
<rect x="919" y="835" width="19.500" height="20" fill="none" stroke="#444" stroke-width="1.200" stroke-dasharray="2.500 1.800"/><circle cx="928" cy="844.500" r="8.600" fill="#dcdcdc" stroke="#666" stroke-width="1.300"/><path d="M933 851l5.500 5v-4.500z" fill="#8a6a3a"/>
<rect x="960.500" y="837.500" width="19.500" height="13.500" fill="#b9b9b9" stroke="#666" stroke-width="1.500"/><path d="M970.250 851v3M965 854.500h10.500" stroke="#666" stroke-width="1.600"/>
<g fill="none" stroke="#444" stroke-width="1.300"><rect x="999.500" y="835.800" width="16" height="15.500"/><path d="M1004.800 835.800v15.500M1010.200 835.800v15.500M999.500 841v0h16M999.500 846.200h16"/></g>
</svg>
<div class="t" style="left:1513px;top:191px;font-size:13px;color:#5a5ad2;font-weight:bold;font-stretch:condensed;font-family:'DejaVu Sans Condensed','DejaVu Sans',sans-serif">Z</div>
<div class="t" style="left:1577px;top:264px;font-size:13px;color:#e0595e;font-weight:bold;font-family:'DejaVu Sans Condensed','DejaVu Sans',sans-serif">X</div>
<div class="t" style="left:1526px;top:233px;font-size:11px;color:#7c828c;font-weight:bold;font-family:'DejaVu Sans Condensed','DejaVu Sans',sans-serif;letter-spacing:-.4px;transform-origin:0 50%;transform:skewY(3deg) scaleX(.9)">FRONT</div>
<!-- browser -->
<div class="a" style="left:199px;top:175px;width:375px;height:5.500px;background:#adadad"></div><div class="a" style="left:199px;top:180.500px;width:375px;height:30px;background:#f4f4f4"></div>
<div class="t" style="left:234.500px;top:186px;font-size:14px;color:#444;letter-spacing:-.3px">BROWSER</div>
<div class="a" style="left:199px;top:831px;width:375px;height:30px;background:#f4f4f4"></div>
<div class="t" style="left:234px;top:837px;font-size:14px;color:#444;letter-spacing:0">COMMENTS</div>
<div class="row" style="left:244px;top:217px;width:265px;height:25.500px;background:#f0f0f0"><div class="cell" style="left:0;width:31px;height:25.500px;background:#f5f5f5"></div><div class="cell" style="left:31px;width:30px;height:25.500px;background:#efefef"></div><div class="cell" style="left:234px;width:31px;height:25.500px;background:#f5f5f5"></div></div>
<div class="t bold" style="left:316px;top:220px;font-size:14px;color:#333;letter-spacing:-.05px">SHOW (Assembly) v3</div>
<div class="row" style="left:267px;top:248px;width:192px"><div class="cell" style="left:0;width:28px;background:#f5f5f5"></div></div>
<div class="t" style="left:308px;top:250px;font-size:14px;color:#454545;letter-spacing:0px">Document Settings</div>
<div class="row" style="left:267px;top:278px;width:152px"><div class="cell" style="left:0;width:28px;background:#f5f5f5"></div></div>
<div class="t" style="left:308px;top:280px;font-size:14px;color:#454545;letter-spacing:0px">Named Views</div>
<div class="row" style="left:267px;top:308px;width:128px"><div class="cell" style="left:0;width:30px;background:#f5f5f5"></div><div class="cell" style="left:30px;width:31px;background:#efefef"></div></div>
<div class="t" style="left:339.5px;top:310px;font-size:14px;color:#454545;letter-spacing:0px">Origin</div>
<div class="row" style="left:267px;top:338px;width:201px"><div class="cb" style="background:#5fd3dc"></div><div class="cell" style="left:5px;width:31px;background:#f5f5f5"></div><div class="cell" style="left:36px;width:31px;background:#efefef"></div><div class="cell" style="left:67px;width:31px;background:#f4f4f4"></div></div>
<div class="t" style="left:376px;top:340px;font-size:14px;color:#454545;letter-spacing:-0.54px">SHOW v1:1</div>
<div class="row" style="left:267px;top:368px;width:211px"><div class="cb" style="background:#e08be2"></div><div class="cell" style="left:5px;width:31px;background:#f5f5f5"></div><div class="cell" style="left:36px;width:31px;background:#efefef"></div><div class="cell" style="left:67px;width:31px;background:#f4f4f4"></div></div>
<div class="t" style="left:376.5px;top:370px;font-size:14px;color:#454545;letter-spacing:-0.23px">Untitled v2:1</div>
<div class="row" style="left:267px;top:398px;width:196px"><div class="cb" style="background:#f8d678"></div><div class="cell" style="left:5px;width:31px;background:#f5f5f5"></div><div class="cell" style="left:36px;width:31px;background:#efefef"></div><div class="cell" style="left:67px;width:31px;background:#f4f4f4"></div></div>
<div class="t" style="left:376.5px;top:400px;font-size:14px;color:#454545;letter-spacing:-0.5px">WAVE v4:1</div>
<div class="row" style="left:267px;top:428px;width:154px"><div class="cb" style="background:#f5a16a"></div><div class="cell" style="left:5px;width:31px;background:#f5f5f5"></div><div class="cell" style="left:36px;width:31px;background:#efefef"></div></div>
<div class="t" style="left:345px;top:430px;font-size:14px;color:#454545;letter-spacing:-0.58px">2WAVE:1</div>
<div class="row" style="left:267px;top:458px;width:186px"><div class="cb" style="background:#f4a2b6"></div><div class="cell" style="left:5px;width:31px;background:#f5f5f5"></div><div class="cell" style="left:36px;width:31px;background:#efefef"></div><div class="cell" style="left:67px;width:31px;background:#f4f4f4"></div></div>
<div class="t" style="left:376.5px;top:460px;font-size:14px;color:#454545;letter-spacing:-0.64px">boat v2:1</div>
<div class="row" style="left:267px;top:488px;width:189px"><div class="cell" style="left:0px;width:31px;background:#f5f5f5"></div><div class="cell" style="left:31px;width:31px;background:#efefef"></div><div class="cell" style="left:62px;width:31px;background:#f4f4f4"></div></div>
<div class="t" style="left:370px;top:490px;font-size:14px;color:#454545;letter-spacing:-0.43px">WAVE v4:2</div>
<div class="row" style="left:267px;top:518px;width:194px"><div class="cell" style="left:0px;width:31px;background:#f5f5f5"></div><div class="cell" style="left:31px;width:31px;background:#efefef"></div><div class="cell" style="left:62px;width:31px;background:#f4f4f4"></div></div>
<div class="t" style="left:370px;top:520px;font-size:14px;color:#454545;letter-spacing:-0.6px">CLOUD v2:1</div>
<div class="row" style="left:267px;top:548px;width:194px"><div class="cell" style="left:0px;width:31px;background:#f5f5f5"></div><div class="cell" style="left:31px;width:31px;background:#efefef"></div><div class="cell" style="left:62px;width:31px;background:#f4f4f4"></div></div>
<div class="t" style="left:370px;top:550px;font-size:14px;color:#454545;letter-spacing:-0.6px">CLOUD v2:2</div>
<div class="row" style="left:267px;top:578px;width:194px"><div class="cell" style="left:0px;width:31px;background:#f5f5f5"></div><div class="cell" style="left:31px;width:31px;background:#efefef"></div><div class="cell" style="left:62px;width:31px;background:#f4f4f4"></div></div>
<div class="t" style="left:370px;top:580px;font-size:14px;color:#454545;letter-spacing:-0.56px">CLOUD v2:3</div>
<div class="row" style="left:267px;top:608px;width:148px"><div class="cell" style="left:0px;width:31px;background:#f5f5f5"></div><div class="cell" style="left:31px;width:31px;background:#efefef"></div></div>
<div class="t" style="left:338.5px;top:610px;font-size:14px;color:#454545;letter-spacing:-0.4px">2WAVE:2</div>
<div class="row" style="left:267px;top:638px;width:214px"><div class="cell" style="left:0px;width:31px;background:#f5f5f5"></div><div class="cell" style="left:31px;width:31px;background:#efefef"></div><div class="cell" style="left:62px;width:31px;background:#f4f4f4"></div></div>
<div class="t" style="left:370px;top:640px;font-size:14px;color:#454545;letter-spacing:-0.41px">character v2:1</div>
<div class="row" style="left:267px;top:668px;width:179px"><div class="cell" style="left:0px;width:31px;background:#f5f5f5"></div><div class="cell" style="left:31px;width:31px;background:#efefef"></div><div class="cell" style="left:62px;width:31px;background:#f4f4f4"></div></div>
<div class="t" style="left:370px;top:670px;font-size:14px;color:#454545;letter-spacing:-0.48px">chai v2:1</div>
<svg style="left:195px;top:175px" width="400" height="692" viewBox="195 175 400 692">
<defs>
<g id="eye"><path d="M-10 0c2.500-4 6-6.300 10-6.300s7.500 2.300 10 6.300c-2.500 4-6 6.300-10 6.300s-7.500-2.300-10-6.300z" fill="#686868"/><circle r="4.200" fill="#f3f3f3"/><circle r="2.400" fill="#686868"/></g>
<g id="chev"><path d="M-3.500-6l6 6-6 6" fill="none" stroke="#f1f1f1" stroke-width="3.600" stroke-opacity=".55"/><path d="M-3.500-6l6 6-6 6" fill="none" stroke="#505050" stroke-width="1.700"/></g>
<linearGradient id="cubg" x1="0" y1="0" x2="1" y2="1"><stop offset="0" stop-color="#e4e4e4"/><stop offset="1" stop-color="#d0d0d0"/></linearGradient>
<g id="cube"><path d="M-8.400-3.900l4.500-4.500h12.400v12.100l-4.800 4.800h-12.100z" fill="url(#cubg)" stroke="#707070" stroke-width="1.400" stroke-linejoin="round"/><path d="M-7.600-3.600l3.900-3.900h11.300l-3.900 3.900z" fill="#f1f1f1"/><path d="M3.800-3.500l3.900-3.900v10.700l-3.900 3.900z" fill="#e3e3e3"/></g>
<g id="link" fill="none" stroke="#6a6a6a" stroke-width="1.900"><g transform="rotate(-38)"><rect x="-10.600" y="-3.300" width="11.800" height="6.600" rx="3.300"/><rect x="-1.200" y="-3.300" width="11.800" height="6.600" rx="3.300"/></g></g>
<g id="folder"><path d="M-9-7.500h6.500l1.500 2.500h10v12.500h-18z" fill="#f4f4f4" stroke="#6f6f6f" stroke-width="1.300" stroke-linejoin="round"/><path d="M-9-4.700h8" stroke="#6f6f6f" stroke-width="1"/></g>
<g id="gear"><g fill="#686868"><circle r="7.300"/><g id="gtt"><rect x="-2.400" y="-10.200" width="4.800" height="20.400" rx="1"/></g><use href="#gtt" transform="rotate(60)"/><use href="#gtt" transform="rotate(120)"/></g><circle r="3.400" fill="#f3f3f3"/></g>
</defs>
<path d="M212 192.500l-3.500 3.500 3.500 3.500zM217 192.500l-3.500 3.500 3.500 3.500z" fill="#777"/>
<rect x="547.500" y="194" width="11" height="2.300" rx=".8" fill="#5a5a5a"/>
<path d="M548 845.500h9.500M552.750 840.750v9.500" stroke="#777" stroke-width="1.800" fill="none"/>
<path d="M221 227l5.800 5.800 5.800-5.800" fill="none" stroke="#f4f4f4" stroke-width="3.800" stroke-opacity=".6"/><path d="M221 227l5.800 5.800 5.800-5.800" fill="none" stroke="#333" stroke-width="1.900"/>
<use href="#eye" x="258" y="230"/>
<g fill="#e4e4e4" stroke="#6d6d6d" stroke-width="1.300" stroke-linejoin="round"><rect x="280.500" y="230" width="8" height="8.500" rx="1"/><rect x="288.500" y="230" width="8.500" height="8.500" rx="1"/><rect x="280.500" y="222.800" width="8" height="7.200" rx="1"/></g>
<circle cx="491.500" cy="229.500" r="7.600" fill="#f6f6f6" stroke="#777" stroke-width="1.200"/><circle cx="491.500" cy="229.500" r="3.800" fill="#555"/>
<use href="#chev" x="249.500" y="260"/>
<use href="#gear" x="279.700" y="260"/>
<use href="#chev" x="249.500" y="290"/>
<use href="#folder" x="279.700" y="290.5"/>
<use href="#chev" x="249.500" y="320"/>
<g transform="translate(280.300,320)" fill="none" stroke="#6a6a6a" stroke-width="1.300"><path d="M-9.500 0c2.500-4 6-6 9.500-6s7 2 9.500 6c-2.500 4-6 6-9.500 6s-7-2-9.500-6z"/><path d="M-4 1.500c0-3 2-4.500 4.500-4.500M-7-7l13 13.500"/></g>
<use href="#folder" x="311.300" y="320"/>
<use href="#chev" x="249.500" y="350"/>
<use href="#eye" x="286.5" y="350"/>
<use href="#cube" x="318.5" y="351"/>
<g transform="translate(312.0,344.5)" fill="none" stroke="#333" stroke-width="1.200"><circle cy="-3.200" r="1.300"/><path d="M0-2v7.500M-2.300 0h4.600M-3.600 2.500c.5 2.500 2 3.200 3.600 3.200s3.100-.7 3.600-3.200"/></g>
<use href="#link" x="349.0" y="350"/>
<use href="#chev" x="249.500" y="380"/>
<use href="#eye" x="286.5" y="380"/>
<use href="#cube" x="318.0" y="380"/>
<use href="#link" x="349.0" y="380"/>
<use href="#chev" x="249.500" y="410"/>
<use href="#eye" x="286.5" y="410"/>
<use href="#cube" x="318.0" y="410"/>
<use href="#link" x="349.0" y="410"/>
<use href="#chev" x="249.500" y="440"/>
<use href="#eye" x="286.5" y="440"/>
<use href="#cube" x="318.0" y="440"/>
<use href="#chev" x="249.500" y="470"/>
<use href="#eye" x="286.5" y="470"/>
<use href="#cube" x="318.0" y="470"/>
<use href="#link" x="349.0" y="470"/>
<use href="#chev" x="249.500" y="500"/>
<use href="#eye" x="280" y="500"/>
<use href="#cube" x="311.5" y="500"/>
<use href="#link" x="342.5" y="500"/>
<use href="#chev" x="249.500" y="530"/>
<use href="#eye" x="280" y="530"/>
<use href="#cube" x="311.5" y="530"/>
<use href="#link" x="342.5" y="530"/>
<use href="#chev" x="249.500" y="560"/>
<use href="#eye" x="280" y="560"/>
<use href="#cube" x="311.5" y="560"/>
<use href="#link" x="342.5" y="560"/>
<use href="#chev" x="249.500" y="590"/>
<use href="#eye" x="280" y="590"/>
<use href="#cube" x="311.5" y="590"/>
<use href="#link" x="342.5" y="590"/>
<use href="#chev" x="249.500" y="620"/>
<use href="#eye" x="280" y="620"/>
<use href="#cube" x="311.5" y="620"/>
<use href="#chev" x="249.500" y="650"/>
<use href="#eye" x="280" y="650"/>
<use href="#cube" x="311.5" y="650"/>
<use href="#link" x="342.5" y="650"/>
<use href="#chev" x="249.500" y="680"/>
<use href="#eye" x="280" y="680"/>
<use href="#cube" x="311.5" y="680"/>
<use href="#link" x="342.5" y="680"/>
</svg>
<!-- scene settings dialog -->
<div class="a" style="left:1233px;top:295px;width:379px;height:563px;box-sizing:border-box;border:3px solid #e2343a"></div>
<div class="a" style="left:1235.500px;top:297.500px;width:374px;height:531.500px;background:#f4f4f4"></div>
<div class="a" style="left:1235.500px;top:326px;width:374px;height:1px;background:#d9d9d9"></div>
<div class="a" style="left:1249px;top:310px;width:10px;height:2px;background:#5a5a5a"></div>
<div class="t" style="left:1268.500px;top:302px;font-size:14px;color:#444;letter-spacing:.1px">SCENE SETTINGS</div>
<svg style="left:1588px;top:306px" width="14" height="12" viewBox="0 0 14 12"><path d="M3 2.500l3.500 3.500-3.500 3.500zM8 2.500l3.500 3.500-3.500 3.500z" fill="#777"/></svg>
<!-- tabs -->
<div class="a" style="left:1235.500px;top:360px;width:374px;height:2px;background:#d4d4d4"></div>
<div class="a" style="left:1343px;top:329.500px;width:192px;height:33px;box-sizing:border-box;background:#f4f4f4;border:1px solid #d0d0d0;border-bottom:0;border-right:2px solid #c9c9c9"></div>
<div class="t lib" style="left:1271.500px;top:333px;font-size:13.700px;color:#3a3a3a">Settings</div>
<div class="t lib" style="left:1379px;top:333px;font-size:13.700px;color:#3a3a3a;letter-spacing:0">Environment Library</div>
<svg style="left:1243px;top:333px" width="24" height="24" viewBox="0 0 24 24"><path d="M2.500 19.500l9-8.500c-.8-3 1.200-6.300 5-6l-2.800 3 .8 2.700 2.700.6 2.800-3c.6 3.400-2.300 6-5.600 5.300l-9 8.300c-1.800 1.200-4-.8-2.900-2.400z" fill="#ececec" stroke="#777" stroke-width="1.200" stroke-linejoin="round"/></svg>
<svg style="left:1350px;top:336px" width="24" height="18" viewBox="0 0 24 18"><defs><linearGradient id="dome" x1="0" y1="0" x2="1" y2="1"><stop offset="0" stop-color="#f5eca6"/><stop offset=".45" stop-color="#dcebf2"/><stop offset="1" stop-color="#7dbcf0"/></linearGradient></defs><path d="M2 14.500c0-6 4-10.500 9.500-10.500s9.500 4.500 9.500 10.500c-2 1.600-5.500 2.300-9.500 2.300s-7.500-.7-9.500-2.300z" fill="url(#dome)" stroke="#777" stroke-width="1.200"/><path d="M2 14.300c2.500-1.400 5.500-2 9.500-2s7 .6 9.500 2" fill="none" stroke="#999" stroke-width=".8"/></svg>
<!-- sections -->
<div class="a" style="left:1247px;top:378.500px;border:5px solid transparent;border-top:7px solid #666;border-bottom:0"></div>
<div class="t bold" style="left:1265px;top:372px;font-size:14px;color:#333">Current Environment</div>
<div class="a" style="left:1367px;top:416px;width:202px;height:60px;background:#ffffff"></div>
<div class="t" style="left:1372.500px;top:436px;font-size:14px;color:#444">Cool Light</div>
<div class="a" style="left:1241px;top:487px;width:352px;height:1.500px;background:#e4e4e4"></div>
<div class="a" style="left:1247px;top:508.500px;border:5px solid transparent;border-top:7px solid #666;border-bottom:0"></div>
<div class="t bold" style="left:1265px;top:502px;font-size:14px;color:#333">Library</div>
<div class="t" style="left:1250px;top:540px;font-size:14px;color:#3e3e3e;letter-spacing:.08px">Working offline - cloud environment ...</div>
<div class="t" style="left:1250px;top:577px;font-size:14px;color:#3e3e3e">Library</div>
<div class="a" style="left:1423px;top:570.500px;width:144px;height:32.500px;background:#ffffff;box-shadow:0 0 0 1px #ececec"></div>
<div class="t" style="left:1432px;top:577px;font-size:14px;color:#3e3e3e">Fusion Library</div>
<div class="a" style="left:1553.500px;top:585px;border:3.500px solid transparent;border-top:4.500px solid #555;border-bottom:0"></div>
<div class="t" style="left:1372.500px;top:641px;font-size:14px;color:#444">Cool Light</div>
<div class="t" style="left:1372.500px;top:709px;font-size:14px;color:#444">Grid Light</div>
<div class="a" style="left:1372px;top:773px;width:180px;height:12px;overflow:hidden"><div class="t" style="left:.5px;top:0;font-size:14px;color:#444">Dim Highlights</div></div>
<!-- scrollbars -->
<div class="a" style="left:1597.500px;top:364px;width:7px;height:228px;background:#dadada;border-radius:3px"></div>
<div class="a" style="left:1561.500px;top:609px;width:4.500px;height:176px;background:#dcdcdc;border-radius:2px"></div>
<!-- thumbnails -->
<svg style="left:1247px;top:416px" width="120" height="370" viewBox="0 0 120 370">
<defs>
<linearGradient id="tfl" x1="0" y1="0" x2="0" y2="1"><stop offset="0" stop-color="#b9b9b9"/><stop offset="1" stop-color="#9d9d9d"/></linearGradient>
<linearGradient id="ttop" x1="0" y1="0" x2="0" y2="1"><stop offset="0" stop-color="#b4b4b4"/><stop offset=".12" stop-color="#9a9a9a"/><stop offset=".32" stop-color="#2a2a2a"/><stop offset=".8" stop-color="#3a3a3a"/><stop offset="1" stop-color="#4a4a4a"/></linearGradient>
<linearGradient id="dimg" x1="0" y1="0" x2="0" y2="1"><stop offset="0" stop-color="#ececec"/><stop offset=".2" stop-color="#c8c8c8"/><stop offset=".5" stop-color="#b0b0b0"/><stop offset="1" stop-color="#a9a9a9"/></linearGradient>
<filter id="b1" x="-10%" y="-10%" width="120%" height="120%"><feGaussianBlur stdDeviation="1.150"/></filter>
<clipPath id="tc"><rect width="120" height="60"/></clipPath>
<g id="cool" clip-path="url(#tc)">
 <rect width="120" height="60" fill="url(#tfl)"/>
 <g filter="url(#b1)">
 <rect x="-2" y="-2" width="124" height="34" fill="url(#ttop)"/>
 <path d="M44 32V22C48 17 54 16 62 16S76 17 80 22V32z" fill="#a2a2a2"/>
 <path d="M38 13C46 9.500 78 9.500 84 13L82 17C74 14 48 14 42 17z" fill="#1c1c1c"/>
 <path d="M19.700 13H39.500L37 27.600H22.500z" fill="#f6f6f6"/><path d="M79.500 13H99.700L97 27.600H82.500z" fill="#f6f6f6"/>
 <circle cx="3" cy="26.600" r="4" fill="#f4f4f4"/><circle cx="118.500" cy="26.600" r="4" fill="#f4f4f4"/>
 </g>
</g>
<g id="grid" clip-path="url(#tc)">
 <rect width="120" height="60" fill="url(#tfl)"/>
 <g filter="url(#b1)">
 <rect x="-2" y="-2" width="124" height="33" fill="url(#ttop)"/>
 <path d="M28 31V20C34 16.500 46 16 60 16S86 16.500 92 20V31z" fill="#a2a2a2"/>
 <path d="M40 11.500C48 9 74 9 80 11.500L78 15.500C70 13 50 13 42 15.500z" fill="#1c1c1c"/>
 <path d="M16 7.500H43.600L37 22.400H25z" fill="#f8f8f8"/><path d="M75.800 7.500H103.900L95 22.400H83z" fill="#f8f8f8"/>
 </g>
</g>
</defs>
<use href="#cool" x="0" y="0"/>
<use href="#cool" x="0" y="205"/>
<use href="#grid" x="0" y="273.500"/>
<g transform="translate(0,340)"><clipPath id="tc3"><rect width="120" height="29"/></clipPath><g clip-path="url(#tc3)"><rect width="120" height="60" fill="url(#dimg)"/><g filter="url(#b1)"><rect x="-2" y="11" width="50" height="20" fill="#9e9e9e" opacity=".5"/><rect x="74" y="11" width="50" height="20" fill="#9e9e9e" opacity=".5"/><path d="M46 31V20C50 15 56 14 61 14S72 15 76 20V31z" fill="#b2b2b2"/><rect x="6.200" y="13.500" width="7.300" height="8.300" fill="#fcfcfc"/><rect x="26" y="12.500" width="10.400" height="9.300" fill="#fcfcfc"/><rect x="79" y="13.500" width="8" height="8.300" fill="#fcfcfc"/><rect x="90" y="13.500" width="9.700" height="8.300" fill="#fcfcfc"/></g></g></g>
</svg>
<!-- footer -->
<div class="a" style="left:1235.500px;top:785px;width:374px;height:44px;background:#f4f4f4"></div>
<div class="btn" style="left:1520.500px;top:792.500px;width:71px;height:30px;border-color:#c2c2c2;background:#f6f6f6;border-radius:2px"></div>
<div class="t" style="left:1536.500px;top:797px;font-size:14px;color:#3e3e3e">Close</div>
<svg style="left:1243px;top:797px" width="20" height="20" viewBox="0 0 20 20"><circle cx="10" cy="10" r="8.800" fill="#8a8a8a"/><rect x="8.800" y="8.500" width="2.600" height="6.500" fill="#f4f4f4"/><circle cx="10" cy="5.700" r="1.500" fill="#f4f4f4"/></svg>
</body></html>
